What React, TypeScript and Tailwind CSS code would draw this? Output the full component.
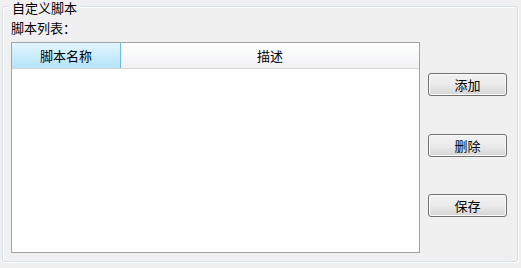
import React from "react";

const font = { fontFamily: '"Noto Sans CJK SC", "Noto Sans", sans-serif' };

function Btn({ label }: { label: string }) {
  return (
    <div className="w-[79px] h-[23px] rounded-[3px] border border-[#707070] bg-gradient-to-b from-[#f2f2f2] via-[#ebebeb] to-[#d5d5d5] shadow-[inset_0_0_0_1px_#fcfcfc] flex items-center justify-center text-[13px] leading-none text-black">
      {label}
    </div>
  );
}

export default function App() {
  return (
    <div className="w-[521px] h-[268px] bg-[#f0f0f0] pt-[6px]" style={font}>
      <div className="relative ml-[2px] w-[516px] h-[256px] rounded-[3px] border border-[#d5dfe5] shadow-[inset_1px_1px_0_#ffffff,1px_1px_0_#ffffff]">
        <div className="absolute left-[6px] top-[-6px] px-[3px] bg-[#f0f0f0] text-[13px] leading-[14px] text-black">
          自定义脚本
        </div>
        <div className="flex flex-col pl-[8px] pt-[12px]">
          <div className="text-[13px] leading-[17px] text-black h-[23px]">脚本列表：</div>
          <div className="flex">
            <div className="w-[409px] h-[211px] border border-[#9ea3a8] bg-white flex flex-col">
              <div className="flex h-[26px] border-b border-[#d5d5d5]">
                <div className="w-[109px] h-full bg-gradient-to-b from-[#e2f6fe] to-[#b4e4fb] border-r border-[#6cbde6] flex items-center justify-center text-[13px] text-black">
                  脚本名称
                </div>
                <div className="flex-1 h-full bg-gradient-to-b from-white to-[#f1f2f4] flex items-center justify-center text-[13px] text-black">
                  描述
                </div>
              </div>
            </div>
            <div className="ml-[8px] pt-[31px] flex flex-col gap-[38px]">
              <Btn label="添加" />
              <Btn label="删除" />
              <div className="-mt-[1px]">
                <Btn label="保存" />
              </div>
            </div>
          </div>
        </div>
      </div>
    </div>
  );
}
